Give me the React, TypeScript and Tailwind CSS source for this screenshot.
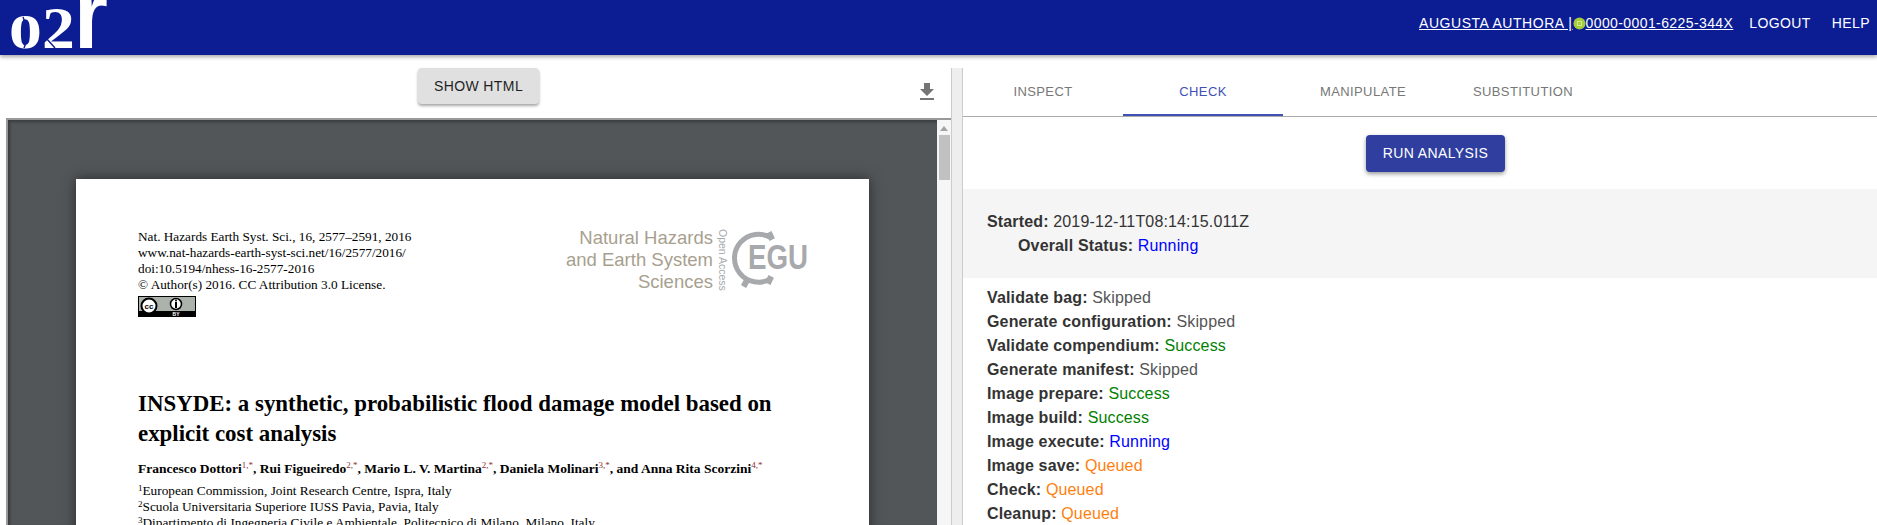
import React from 'react';

const steps = [
	{ label: 'Validate bag', status: 'Skipped' },
	{ label: 'Generate configuration', status: 'Skipped' },
	{ label: 'Validate compendium', status: 'Success' },
	{ label: 'Generate manifest', status: 'Skipped' },
	{ label: 'Image prepare', status: 'Success' },
	{ label: 'Image build', status: 'Success' },
	{ label: 'Image execute', status: 'Running' },
	{ label: 'Image save', status: 'Queued' },
	{ label: 'Check', status: 'Queued' },
	{ label: 'Cleanup', status: 'Queued' },
];

const statusClass: Record<string, string> = {
	Skipped: 'text-[#555555]',
	Success: 'text-[#008000]',
	Running: 'text-[#0000ff]',
	Queued: 'text-[#ff7f0e]',
};

const Logo = () => (
	<svg width="115" height="55" viewBox="0 0 115 55" className="shrink-0">
		<g fill="#ffffff" fontWeight="700">
			<text x="9" y="48" fontSize="68" fontFamily="'Liberation Serif', serif" textLength="33" lengthAdjust="spacingAndGlyphs">o</text>
			<text x="42" y="48" fontSize="60" fontFamily="'Liberation Serif', serif" textLength="33" lengthAdjust="spacingAndGlyphs">2</text>
			<text x="74" y="48" fontSize="100" fontFamily="'Liberation Sans', sans-serif" textLength="34" lengthAdjust="spacingAndGlyphs">r</text>
		</g>
		<path d="M23 17l3 8-2 7 3 8-3 8M46 38l9 10" stroke="#0c1d94" strokeWidth="1.4" fill="none" />
	</svg>
);

const OrcidDot = () => (
	<svg width="13" height="13" viewBox="0 0 13 13" className="shrink-0">
		<circle cx="6.5" cy="6.5" r="6" fill="#a6ce39" />
		<rect x="4.5" y="4.5" width="4" height="4" fill="none" stroke="#d3e69a" strokeWidth="1" />
	</svg>
);

const EguLogo = () => (
	<svg width="78" height="60" viewBox="0 0 78 60" className="shrink-0">
		<g transform="translate(-1.5 0)" fill="#a7a9ac">
			<path d="M42 9 A24 24 0 1 0 41 50" fill="none" stroke="#a7a9ac" strokeWidth="5" />
			<rect x="38" y="3" width="6" height="8" transform="rotate(-25 41 7)" />
			<rect x="37" y="47" width="6" height="8" transform="rotate(25 40 51)" />
			<rect x="13" y="50" width="6" height="8" transform="rotate(30 16 54)" />
		</g>
		<text x="17" y="40" fill="#a7a9ac" fontFamily="'Liberation Sans', sans-serif" fontWeight="700" fontSize="35" textLength="60" lengthAdjust="spacingAndGlyphs">EGU</text>
	</svg>
);

const CcBadge = () => (
	<svg width="58" height="21" viewBox="0 0 58 21" className="block">
		<rect x="0" y="0" width="58" height="21" fill="#000000" />
		<rect x="1" y="1" width="56" height="14" fill="#aab2ab" />
		<circle cx="11" cy="10" r="7.5" fill="#ffffff" stroke="#000000" strokeWidth="2" />
		<text x="11" y="13" textAnchor="middle" fontSize="8" fontWeight="700" fontFamily="'Liberation Sans', sans-serif">cc</text>
		<circle cx="38" cy="8" r="5.5" fill="#ffffff" stroke="#000000" strokeWidth="1.5" />
		<rect x="37" y="6" width="2" height="6" fill="#000000" />
		<circle cx="38" cy="4.6" r="1" fill="#000000" />
		<text x="38" y="20" textAnchor="middle" fontSize="5" fontWeight="700" fill="#ffffff" fontFamily="'Liberation Sans', sans-serif">BY</text>
	</svg>
);

const Sup = ({ children }: { children: React.ReactNode }) => (
	<sup className="text-[9px] font-normal text-[#8f2f2f] top-[-5px]">{children}</sup>
);

const PaperPage = () => (
	<div className="w-[793px] h-[500px] shrink-0 bg-white px-[62px] pt-[50px] text-black tracking-normal font-['Liberation_Serif',serif] shadow-[0_0_12px_rgba(0,0,0,0.5)]">
		<div className="flex justify-between">
			<div className="text-[13.25px] leading-[16px]">
				<div>Nat. Hazards Earth Syst. Sci., 16, 2577–2591, 2016</div>
				<div>www.nat-hazards-earth-syst-sci.net/16/2577/2016/</div>
				<div>doi:10.5194/nhess-16-2577-2016</div>
				<div>© Author(s) 2016. CC Attribution 3.0 License.</div>
				<div className="mt-[3px]">
					<CcBadge />
				</div>
			</div>
			<div className="flex items-start gap-[1px] -mr-[2px]">
				<div className="mr-[2px] -mt-[2px] text-right text-[18.5px] leading-[22px] text-[#a89f8f] font-['Liberation_Sans',sans-serif]">
					<div>Natural Hazards</div>
					<div>and Earth System</div>
					<div>Sciences</div>
				</div>
				<div className="w-[14px] h-[60px] [writing-mode:vertical-rl] whitespace-nowrap text-center text-[10.5px] leading-[14px] text-[#a7a9ac] font-['Liberation_Sans',sans-serif]">
					Open Access
				</div>
				<EguLogo />
			</div>
		</div>
		<h1 className="mt-[72px] text-[22.9px] leading-[30px] font-bold">
			INSYDE: a synthetic, probabilistic flood damage model based on explicit cost analysis
		</h1>
		<p className="mt-[12px] text-[13.5px] leading-[16px] font-bold whitespace-nowrap">
			Francesco Dottori<Sup>1,*</Sup>, Rui Figueiredo<Sup>2,*</Sup>, Mario L. V. Martina<Sup>2,*</Sup>, Daniela Molinari<Sup>3,*</Sup>, and Anna Rita Scorzini<Sup>4,*</Sup>
		</p>
		<div className="mt-[6px] text-[13.3px] leading-[16px]">
			<div><sup className="text-[9px] top-[-4px]">1</sup>European Commission, Joint Research Centre, Ispra, Italy</div>
			<div><sup className="text-[9px] top-[-4px]">2</sup>Scuola Universitaria Superiore IUSS Pavia, Pavia, Italy</div>
			<div><sup className="text-[9px] top-[-4px]">3</sup>Dipartimento di Ingegneria Civile e Ambientale, Politecnico di Milano, Milano, Italy</div>
		</div>
	</div>
);

const Tab = ({ label, active }: { label: string; active?: boolean }) => (
	<div
		className={`w-[160px] h-[48px] pt-[2px] flex items-center justify-center text-[13px] tracking-[0.4px] border-b-2 ${
			active ? 'text-[#3f51b5] border-[#3f51b5]' : 'text-[#777777] border-transparent'
		}`}
	>
		{label}
	</div>
);

export default function App() {
	return (
		<div className="h-[525px] w-[1877px] overflow-hidden flex flex-col bg-white text-[16px] tracking-[0.15px] text-[#333333] font-['Liberation_Sans',sans-serif]">
			<header className="relative z-10 h-[55px] shrink-0 bg-[#0c1d94] text-white flex items-start justify-between shadow-[0_2px_4px_rgba(0,0,0,0.35)]">
				<Logo />
				<div className="flex items-center h-[46px] text-[14px] tracking-[0.4px] pr-[7px]">
					<a className="underline whitespace-nowrap flex items-center">
						<span className="tracking-[0.55px] whitespace-pre">AUGUSTA AUTHORA |</span>
						<OrcidDot />
						0000-0001-6225-344X
					</a>
					<span className="ml-[16px]">LOGOUT</span>
					<span className="ml-[21px]">HELP</span>
				</div>
			</header>

			<main className="flex flex-1 min-h-0">
				<section className="w-[951px] shrink-0 flex flex-col min-h-0">
					<div className="h-[63px] shrink-0 grid grid-cols-[418px_121px_1fr] items-start pt-[13px]">
						<div />
						<button className="h-[36px] bg-[#e0e0e0] rounded-[4px] text-[14px] tracking-[0.4px] text-[#1f1f1f] shadow-[0_2px_3px_rgba(0,0,0,0.35)]">
							SHOW HTML
						</button>
						<div className="flex justify-end pr-[12px] pt-[12px]">
							<svg width="24" height="24" viewBox="0 0 24 24" fill="#757575">
								<path d="M19 9h-4V3H9v6H5l7 7 7-7zM5 18v2h14v-2H5z" />
							</svg>
						</div>
					</div>
					<div className="flex-1 min-h-0 ml-[6px] border-l-2 border-t-2 border-[#999999] flex overflow-hidden">
						<div className="flex-1 min-w-0 bg-[#525659] pl-[68px] pt-[59px] flex overflow-hidden shadow-[inset_2px_2px_3px_rgba(0,0,0,0.3)]">
							<PaperPage />
						</div>
						<div className="w-[14px] shrink-0 bg-[#f6f6f6] flex flex-col items-center pt-[6px]">
							<div className="w-0 h-0 border-x-[4px] border-x-transparent border-b-[5px] border-b-[#a3a3a3]" />
							<div className="mt-[4px] w-[11px] h-[45px] bg-[#c1c1c1]" />
						</div>
					</div>
				</section>

				<div className="w-[12px] shrink-0 mt-[13px] bg-[#eeeeee] border-x border-[#cccccc]" />

				<section className="flex-1 min-w-0 flex flex-col">
					<nav className="h-[62px] shrink-0 flex items-end border-b border-[#aaaaaa]">
						<Tab label="INSPECT" />
						<Tab label="CHECK" active />
						<Tab label="MANIPULATE" />
						<Tab label="SUBSTITUTION" />
					</nav>
					<div className="h-[72px] shrink-0 pl-[403px] pt-[18px]">
						<button className="w-[139px] h-[37px] rounded-[4px] bg-[#303f9f] text-white text-[14px] tracking-[0.4px] shadow-[0_2px_4px_rgba(0,0,0,0.4)]">
							RUN ANALYSIS
						</button>
					</div>
					<div className="h-[89px] shrink-0 bg-[#f5f5f5] pl-[24px] pt-[21px] leading-[24px]">
						<div>
							<b>Started:</b> 2019-12-11T08:14:15.011Z
						</div>
						<div className="pl-[31px]">
							<b>Overall Status:</b> <span className="text-[#0000ff]">Running</span>
						</div>
					</div>
					<div className="pl-[24px] pt-[8px] leading-[24px]">
						{steps.map((step) => (
							<div key={step.label}>
								<b>{step.label}:</b>{' '}
								<span className={statusClass[step.status]}>{step.status}</span>
							</div>
						))}
					</div>
				</section>
			</main>
		</div>
	);
}
